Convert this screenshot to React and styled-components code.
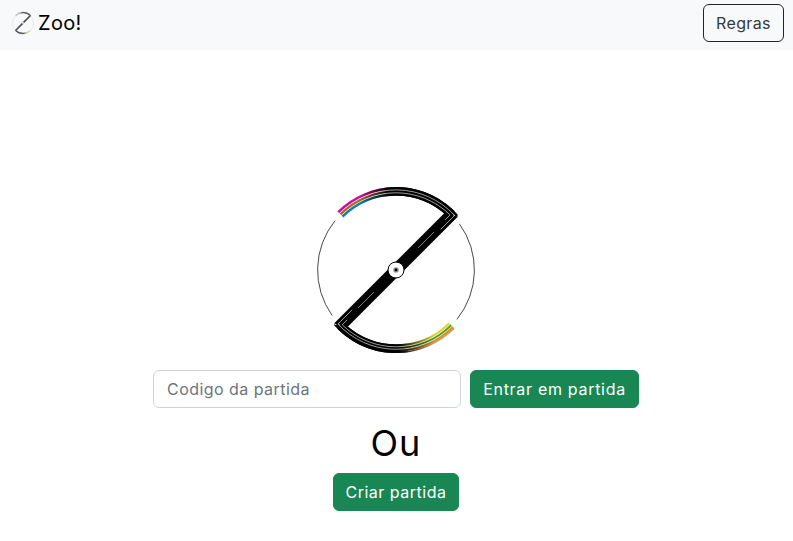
import React from 'react';
import styled, { createGlobalStyle } from 'styled-components';

const GlobalStyle = createGlobalStyle`
    html, body { margin: 0; padding: 0; background: #fff; }
    body {
        font-family: Inter, "Open Sans", "Liberation Sans", sans-serif;
        color: #212529;
        font-size: 16px;
    }
    * { box-sizing: border-box; }
`;

const Navbar = styled.nav`
    height: 50px;
    background: #f8f9fa;
    display: flex;
    align-items: center;
    justify-content: space-between;
    padding: 0 9px 4px 11px;
`;

const Brand = styled.div`
    display: flex;
    align-items: center;
    gap: 3px;
    font-size: 20px;
    color: #000;
    letter-spacing: 0.3px;
`;

const LogoSvg = styled.svg`
    display: block;
    opacity: ${props => props.$faded ? 0.72 : 1};
`;

const RulesButton = styled.button`
    width: 81px;
    height: 38px;
    background: transparent;
    border: 1px solid #212529;
    border-radius: 6px;
    font: inherit;
    color: #343a40;
    letter-spacing: 0.35px;
`;

const Main = styled.main`
    display: flex;
    flex-direction: column;
    align-items: center;
    padding: 130px 1px 0 0;
`;

const JoinRow = styled.div`
    display: flex;
    gap: 9px;
    margin-top: 10px;
`;

const CodeInput = styled.input`
    width: 308px;
    height: 38px;
    border: 1px solid #ced4da;
    border-radius: 6px;
    padding: 0 13px;
    font: inherit;
    letter-spacing: 0.45px;
    &::placeholder { color: #6c757d; opacity: 1; }
`;

const GreenButton = styled.button`
    width: ${props => props.$width}px;
    height: 38px;
    background: #198754;
    border: 1px solid #198754;
    border-radius: 6px;
    color: #fff;
    font: inherit;
    letter-spacing: ${props => props.$tracking}px;
    padding: 0;
`;

const Divider = styled.h2`
    margin: 14px 0 8px;
    font-size: 36px;
    font-weight: 400;
    line-height: 43px;
    color: #000;
    letter-spacing: 1px;
`;

const pt = (r, deg) => {
    const a = (deg * Math.PI) / 180;
    return `${(r * Math.cos(a)).toFixed(2)} ${(r * Math.sin(a)).toFixed(2)}`;
};

// point where the circle of radius r meets the diagonal line x + y = c (upper right side)
const corner = (r, c) => {
    const a = (c + Math.sqrt(2 * r * r - c * c)) / 2;
    return [a, c - a];
};

// arc from the tail at 225deg, over the top, into the corner and a bit down the bar
const topStripe = (r, c, run, start = 225) => {
    const [x, y] = corner(r, c);
    return `M ${pt(r, start)} A ${r} ${r} 0 0 1 ${x.toFixed(2)} ${y.toFixed(2)} L ${(x - run).toFixed(2)} ${(y + run).toFixed(2)}`;
};

const bottomStripe = (r, c, run, start = 45) => {
    const [x, y] = corner(r, c);
    return `M ${pt(r, start)} A ${r} ${r} 0 0 1 ${(-x).toFixed(2)} ${(-y).toFixed(2)} L ${(-x + run).toFixed(2)} ${(-y - run).toFixed(2)}`;
};

const topColors = [
    { r: 81.6, color: '#d0109a', id: 'fadeMagenta' },
    { r: 78.6, color: '#b5651d', id: 'fadeBrown' },
    { r: 75.7, color: '#0f80b0', id: 'fadeBlue' },
];

const bottomColors = [
    { r: 82.4, color: '#a8a8a8', id: 'fadeGray' },
    { r: 80.6, color: '#e8900c', id: 'fadeOrange' },
    { r: 78, color: '#3da03a', id: 'fadeGreen' },
    { r: 75.6, color: '#e2d32c', id: 'fadeYellow' },
];

function ZooLogo({ size, faded }) {
    return (
        <LogoSvg $faded={faded} width={size} height={size} viewBox="-90 -90 180 180">
            <defs>
                {topColors.map((s) => (
                    <linearGradient key={s.id} id={s.id} gradientUnits="userSpaceOnUse" x1="-60" y1="0" x2="-8" y2="0">
                        <stop offset="0" stopColor={s.color} />
                        <stop offset="0.45" stopColor={s.color} />
                        <stop offset="1" stopColor="#000" />
                    </linearGradient>
                ))}
                {bottomColors.map((s) => (
                    <linearGradient key={s.id} id={s.id} gradientUnits="userSpaceOnUse" x1="58" y1="0" x2="2" y2="0">
                        <stop offset="0" stopColor={s.color} />
                        <stop offset="0.35" stopColor={s.color} />
                        <stop offset="1" stopColor="#000" />
                    </linearGradient>
                ))}
            </defs>

            <path d={`M ${pt(78.4, 219)} A 78.4 78.4 0 0 0 ${pt(78.4, 144.5)}`} fill="none" stroke="#333" strokeWidth="0.9" />
            <path d={`M ${pt(78.4, -36)} A 78.4 78.4 0 0 1 ${pt(78.4, 39)}`} fill="none" stroke="#333" strokeWidth="0.9" />

            {/* diagonal bar */}
            <polygon points="48,-56.5 62,-53.5 8.5,0 -8.5,0" fill="#000" />
            <polygon points="-48,56.5 -62,53.5 -8.5,0 8.5,0" fill="#000" />

            {/* solid black under the band, so only the tails show the gaps */}
            <path d={topStripe(78.7, 0, 0, 262)} fill="none" stroke="#000" strokeWidth="8.6" />
            <path d={bottomStripe(78.7, 0, 0, 82)} fill="none" stroke="#000" strokeWidth="8.6" />

            {topColors.map((s, i) => (
                <path key={s.id} d={topStripe(s.r, [7, 3, -3.5][i], 0)} fill="none" stroke={`url(#${s.id})`} strokeWidth="2.7" />
            ))}
            {bottomColors.map((s, i) => (
                <path key={s.id} d={bottomStripe(s.r, [7, 5, 1, -3.5][i], 0)} fill="none" stroke={`url(#${s.id})`} strokeWidth={i === 0 ? 1.4 : 2.6} />
            ))}

            {/* white hairlines between the stripes */}
            <path d={topStripe(80.1, 4, 14)} fill="none" stroke="#fff" strokeWidth="0.6" />
            <path d={topStripe(77.2, -1, 5)} fill="none" stroke="#fff" strokeWidth="0.6" />
            <path d={bottomStripe(79.3, 4, 14)} fill="none" stroke="#fff" strokeWidth="0.6" />
            <path d={bottomStripe(76.8, -1, 5)} fill="none" stroke="#fff" strokeWidth="0.6" />
            <path d="M 22 -22 L 38 -38 M -38 38 L -22 22" fill="none" stroke="#fff" strokeWidth="0.5" />

            {/* hub */}
            <circle cx="0" cy="0" r="8" fill="#fff" stroke="#000" strokeWidth="1" />
            <circle cx="0" cy="0" r="2.8" fill="#999" />
            <circle cx="0" cy="0" r="1.4" fill="#000" />
        </LogoSvg>
    );
}

export default function App() {
    return (
        <>
            <GlobalStyle />
            <Navbar>
                <Brand>
                    <ZooLogo size={24} faded />
                    Zoo!
                </Brand>
                <RulesButton>Regras</RulesButton>
            </Navbar>
            <Main>
                <ZooLogo size={180} />
                <JoinRow>
                    <CodeInput placeholder="Codigo da partida" />
                    <GreenButton $width={169} $tracking={0.7}>Entrar em partida</GreenButton>
                </JoinRow>
                <Divider>Ou</Divider>
                <GreenButton $width={126} $tracking={0.5}>Criar partida</GreenButton>
            </Main>
        </>
    );
}
